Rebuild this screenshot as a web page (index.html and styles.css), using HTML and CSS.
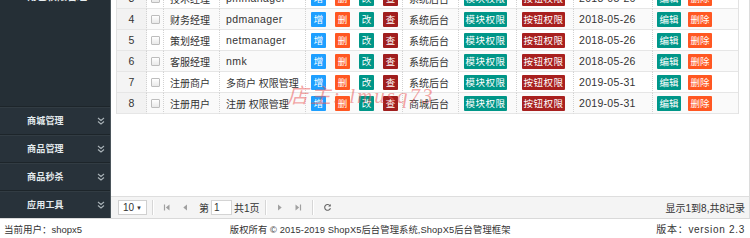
FILE: index.html
```html
<!DOCTYPE html>
<html lang="zh-CN">
<head>
<meta charset="utf-8">
<title>ShopX5 角色管理</title>
<link rel="stylesheet" href="styles.css">
</head>
<body>
<div class="app">
  <div class="main">
    <aside class="sidebar">
      <div class="side-top">
        <div class="sub-item"><span class="sub-ico"></span>角色权限管理</div>
      </div>
      <ul class="menu">
        <li class="menu-item"><span>商城管理</span><svg class="chev" viewBox="0 0 8 8"><path d="M1 1 L4 3.5 L7 1 M1 4.5 L4 7 L7 4.5" fill="none" stroke="#aab3b8" stroke-width="1.1"/></svg></li>
        <li class="menu-item"><span>商品管理</span><svg class="chev" viewBox="0 0 8 8"><path d="M1 1 L4 3.5 L7 1 M1 4.5 L4 7 L7 4.5" fill="none" stroke="#aab3b8" stroke-width="1.1"/></svg></li>
        <li class="menu-item"><span>商品秒杀</span><svg class="chev" viewBox="0 0 8 8"><path d="M1 1 L4 3.5 L7 1 M1 4.5 L4 7 L7 4.5" fill="none" stroke="#aab3b8" stroke-width="1.1"/></svg></li>
        <li class="menu-item"><span>应用工具</span><svg class="chev" viewBox="0 0 8 8"><path d="M1 1 L4 3.5 L7 1 M1 4.5 L4 7 L7 4.5" fill="none" stroke="#aab3b8" stroke-width="1.1"/></svg></li>
      </ul>
    </aside>
    <section class="content">
      <div class="grid">
        <table class="dg">
          <colgroup>
            <col class="c-num"><col class="c-chk"><col class="c-role"><col class="c-user"><col class="c-ops"><col class="c-sys"><col class="c-mod"><col class="c-btn"><col class="c-date"><col class="c-act">
          </colgroup>
          <tbody>
            <tr>
              <td class="num">3</td><td class="chk"><span class="cb"></span></td><td class="txt">技术经理</td><td class="txt en">pmmanager</td>
              <td class="ops"><span class="b b-add">增</span><span class="b b-del">删</span><span class="b b-edit">改</span><span class="b b-view">查</span></td>
              <td class="txt">系统后台</td><td class="pad"><span class="b wide teal">模块权限</span></td><td class="pad"><span class="b wide red">按钮权限</span></td><td class="txt date">2018-05-26</td>
              <td class="act"><span class="b mid teal">编辑</span><span class="b mid orange">删除</span></td>
            </tr>
            <tr class="alt">
              <td class="num">4</td><td class="chk"><span class="cb"></span></td><td class="txt">财务经理</td><td class="txt en">pdmanager</td>
              <td class="ops"><span class="b b-add">增</span><span class="b b-del">删</span><span class="b b-edit">改</span><span class="b b-view">查</span></td>
              <td class="txt">系统后台</td><td class="pad"><span class="b wide teal">模块权限</span></td><td class="pad"><span class="b wide red">按钮权限</span></td><td class="txt date">2018-05-26</td>
              <td class="act"><span class="b mid teal">编辑</span><span class="b mid orange">删除</span></td>
            </tr>
            <tr>
              <td class="num">5</td><td class="chk"><span class="cb"></span></td><td class="txt">策划经理</td><td class="txt en">netmanager</td>
              <td class="ops"><span class="b b-add">增</span><span class="b b-del">删</span><span class="b b-edit">改</span><span class="b b-view">查</span></td>
              <td class="txt">系统后台</td><td class="pad"><span class="b wide teal">模块权限</span></td><td class="pad"><span class="b wide red">按钮权限</span></td><td class="txt date">2018-05-26</td>
              <td class="act"><span class="b mid teal">编辑</span><span class="b mid orange">删除</span></td>
            </tr>
            <tr class="alt">
              <td class="num">6</td><td class="chk"><span class="cb"></span></td><td class="txt">客服经理</td><td class="txt en">nmk</td>
              <td class="ops"><span class="b b-add">增</span><span class="b b-del">删</span><span class="b b-edit">改</span><span class="b b-view">查</span></td>
              <td class="txt">系统后台</td><td class="pad"><span class="b wide teal">模块权限</span></td><td class="pad"><span class="b wide red">按钮权限</span></td><td class="txt date">2018-05-26</td>
              <td class="act"><span class="b mid teal">编辑</span><span class="b mid orange">删除</span></td>
            </tr>
            <tr>
              <td class="num">7</td><td class="chk"><span class="cb"></span></td><td class="txt">注册商户</td><td class="txt">多商户 权限管理</td>
              <td class="ops"><span class="b b-add">增</span><span class="b b-del">删</span><span class="b b-edit">改</span><span class="b b-view">查</span></td>
              <td class="txt">系统后台</td><td class="pad"><span class="b wide teal">模块权限</span></td><td class="pad"><span class="b wide red">按钮权限</span></td><td class="txt date">2019-05-31</td>
              <td class="act"><span class="b mid teal">编辑</span><span class="b mid orange">删除</span></td>
            </tr>
            <tr class="alt">
              <td class="num">8</td><td class="chk"><span class="cb"></span></td><td class="txt">注册用户</td><td class="txt">注册 权限管理</td>
              <td class="ops"><span class="b b-add">增</span><span class="b b-del">删</span><span class="b b-edit">改</span><span class="b b-view">查</span></td>
              <td class="txt">商城后台</td><td class="pad"><span class="b wide teal">模块权限</span></td><td class="pad"><span class="b wide red">按钮权限</span></td><td class="txt date">2019-05-31</td>
              <td class="act"><span class="b mid teal">编辑</span><span class="b mid orange">删除</span></td>
            </tr>
          </tbody>
        </table>
        <div class="watermark">店主: lmusq73</div>
      </div>
      <div class="pager">
        <div class="pg-left">
          <span class="pg-select">10 <span class="caret">▼</span></span>
          <span class="sep"></span>
          <svg class="pg-ico" viewBox="0 0 8 9"><path d="M1.5 1.5 V7.5" stroke="#a0a0a0" stroke-width="1.2"/><path d="M6.5 1.5 L2.8 4.5 L6.5 7.5 Z" fill="#a0a0a0"/></svg>
          <svg class="pg-ico" viewBox="0 0 8 9"><path d="M6 1.5 L2.3 4.5 L6 7.5 Z" fill="#a0a0a0"/></svg>
          <span class="pg-txt first">第</span><span class="pg-input">1</span><span class="pg-txt">共1页</span>
          <span class="sep"></span>
          <svg class="pg-ico" viewBox="0 0 8 9"><path d="M2 1.5 L5.7 4.5 L2 7.5 Z" fill="#a0a0a0"/></svg>
          <svg class="pg-ico" viewBox="0 0 8 9"><path d="M1.5 1.5 L5.2 4.5 L1.5 7.5 Z" fill="#a0a0a0"/><path d="M6.5 1.5 V7.5" stroke="#a0a0a0" stroke-width="1.2"/></svg>
          <span class="sep"></span>
          <svg class="pg-ico refresh" viewBox="0 0 10 10"><path d="M7.8 3.2 A3.2 3.2 0 1 0 8.2 5.6" fill="none" stroke="#666" stroke-width="1.2"/><path d="M8.6 1.2 V4 H5.8 Z" fill="#666"/></svg>
        </div>
        <div class="pg-info">显示1到8,共8记录</div>
      </div>
    </section>
  </div>
  <footer class="footer">
    <span class="f-left">当前用户：shopx5</span>
    <span class="f-mid">版权所有 © 2015-2019 ShopX5后台管理系统,ShopX5后台管理框架</span>
    <span class="f-right">版本：version 2.3</span>
  </footer>
</div>
</body>
</html>
```

FILE: styles.css
```css
* { box-sizing: border-box; }
html, body {
  margin: 0;
  padding: 0;
  width: 750px;
  height: 238px;
  overflow: hidden;
  background: #fff;
  font-family: "Liberation Sans", Arial, "Noto Sans CJK SC", sans-serif;
  color: #333;
}
.app { display: flex; flex-direction: column; height: 238px; }
.main { display: flex; height: 218px; }

/* sidebar */
.sidebar {
  width: 111px;
  flex: none;
  background: #28323a;
  border-right: 1px solid #4b555b;
  display: flex;
  flex-direction: column;
}
.side-top {
  flex: 1;
  background: #252f36;
  overflow: hidden;
}
.sub-item {
  margin-top: -12px;
  height: 14px;
  padding-left: 20px;
  display: flex;
  align-items: center;
  gap: 2px;
  font-size: 10px;
  font-weight: bold;
  color: #e6ecef;
}
.sub-ico { width: 5px; height: 6px; background: #dfe6ea; }
.menu { list-style: none; margin: 0; padding: 0; }
.menu-item {
  height: 28px;
  border-top: 1px solid #1d252a;
  box-shadow: inset 0 1px 0 #323c43;
  display: flex;
  align-items: center;
  justify-content: space-between;
  padding: 0 5px 0 27px;
  font-size: 9px;
  font-weight: bold;
  color: #e4ebee;
  letter-spacing: 0.2px;
}
.chev { width: 8px; height: 8px; }

/* content */
.content {
  flex: 1;
  display: flex;
  flex-direction: column;
  background: #fff;
  border-right: 1px solid #dcdcdc;
  min-width: 0;
}
.grid {
  flex: 1;
  position: relative;
  overflow: hidden;
  padding-left: 5px;
}
.dg {
  table-layout: fixed;
  width: 621px;
  border-collapse: separate;
  border-spacing: 0;
  margin-top: -12px;
  border-left: 1px solid #e2e2e2;
  border-right: 1px solid #e2e2e2;
  font-size: 10px;
}
.c-num { width: 30px; }
.c-chk { width: 17px; }
.c-role { width: 56px; }
.c-user { width: 86px; }
.c-ops { width: 97px; }
.c-sys { width: 56px; }
.c-mod { width: 58px; }
.c-btn { width: 57px; }
.c-date { width: 79px; }
.c-act { width: 85px; }
.dg td {
  height: 21px;
  padding: 0;
  border-bottom: 1px solid #e6e6e6;
  border-right: 1px dotted #d2d2d2;
  white-space: nowrap;
  overflow: hidden;
  vertical-align: middle;
  background: #fff;
}
.dg tr.alt td { background: #fafafa; }
.dg td:last-child { border-right: none; }
.dg td.num { text-align: center; background: #f4f4f4; color: #333; font-size: 10.5px; }
.dg tr.alt td.num { background: #f2f2f2; }
.dg td.chk { text-align: center; }
.cb {
  display: inline-block;
  width: 9px;
  height: 9px;
  border: 1px solid #bdbdbd;
  border-radius: 1px;
  background: linear-gradient(#fff, #e9e9e9);
  vertical-align: middle;
}
.dg td.txt { padding-left: 6px; color: #333; }
.dg td.en { font-size: 10.5px; letter-spacing: 0.4px; }
.dg td.date { padding-left: 5px; font-size: 10.5px; letter-spacing: 0.3px; }
.dg td.ops { padding-left: 5px; }
.dg td.pad { padding-left: 5px; }
.dg td.act { padding-left: 4px; }
.ops, .act { font-size: 0; }
.b {
  display: inline-block;
  height: 15px;
  line-height: 15px;
  color: #fff;
  font-size: 9.5px;
  text-align: center;
  vertical-align: middle;
  border-radius: 1px;
}
.b-add, .b-del, .b-edit, .b-view { width: 15px; margin-right: 9px; }
.b-add { background: #1e9fff; }
.b-del { background: #ff5722; }
.b-edit { background: #009688; }
.b-view { background: #a01e1e; margin-right: 0; }
.b.wide { width: 43px; letter-spacing: 0.5px; }
.b.mid { width: 24px; margin-right: 7px; }
.teal { background: #009688; }
.red { background: #a8201f; }
.orange { background: #ff5722; }

.watermark {
  position: absolute;
  left: 176px;
  top: 79px;
  font-family: "Liberation Serif", "Noto Sans CJK SC", serif;
  font-size: 21px;
  font-style: italic;
  color: rgba(235, 90, 90, 0.55);
  letter-spacing: 2px;
  pointer-events: none;
}

/* pager */
.pager {
  height: 22px;
  flex: none;
  border-top: 1px solid #dedede;
  background: #f4f4f4;
  display: flex;
  align-items: center;
  justify-content: space-between;
  padding: 0 4px 0 7px;
  font-size: 10px;
}
.pg-left { display: flex; align-items: center; }
.pg-select {
  width: 29px;
  height: 15px;
  border: 1px solid #d0d0d0;
  background: #fff;
  display: flex;
  align-items: center;
  justify-content: space-between;
  padding: 0 4px 0 4px;
  font-size: 10px;
}
.caret { font-size: 6px; color: #333; }
.sep {
  width: 2px;
  height: 15px;
  border-left: 1px solid #d6d6d6;
  border-right: 1px solid #fff;
  margin: 0 4px 0 5px;
}
.pg-ico { width: 8px; height: 9px; margin: 0 5px; }
.pg-ico.refresh { width: 9px; height: 9px; }
.pg-txt { font-size: 10px; color: #333; }
.pg-txt.first { margin-left: 5px; }
.pg-input {
  width: 21px;
  height: 15px;
  margin: 0 2px;
  border: 1px solid #d4d4d4;
  background: #fff;
  padding-left: 2px;
  line-height: 13px;
  font-size: 10px;
}
.pg-info { font-size: 10px; color: #333; }

/* footer */
.footer {
  height: 20px;
  flex: none;
  display: flex;
  align-items: center;
  justify-content: space-between;
  padding: 0 5px 0 4px;
  font-size: 10px;
  color: #333;
  background: #fff;
  border-top: 1px solid #d9d9d9;
}
.f-left { font-size: 9.5px; }
.f-mid { margin-left: 2px; font-size: 9.3px; letter-spacing: 0.1px; }
.f-right { letter-spacing: 0.7px; }
```
